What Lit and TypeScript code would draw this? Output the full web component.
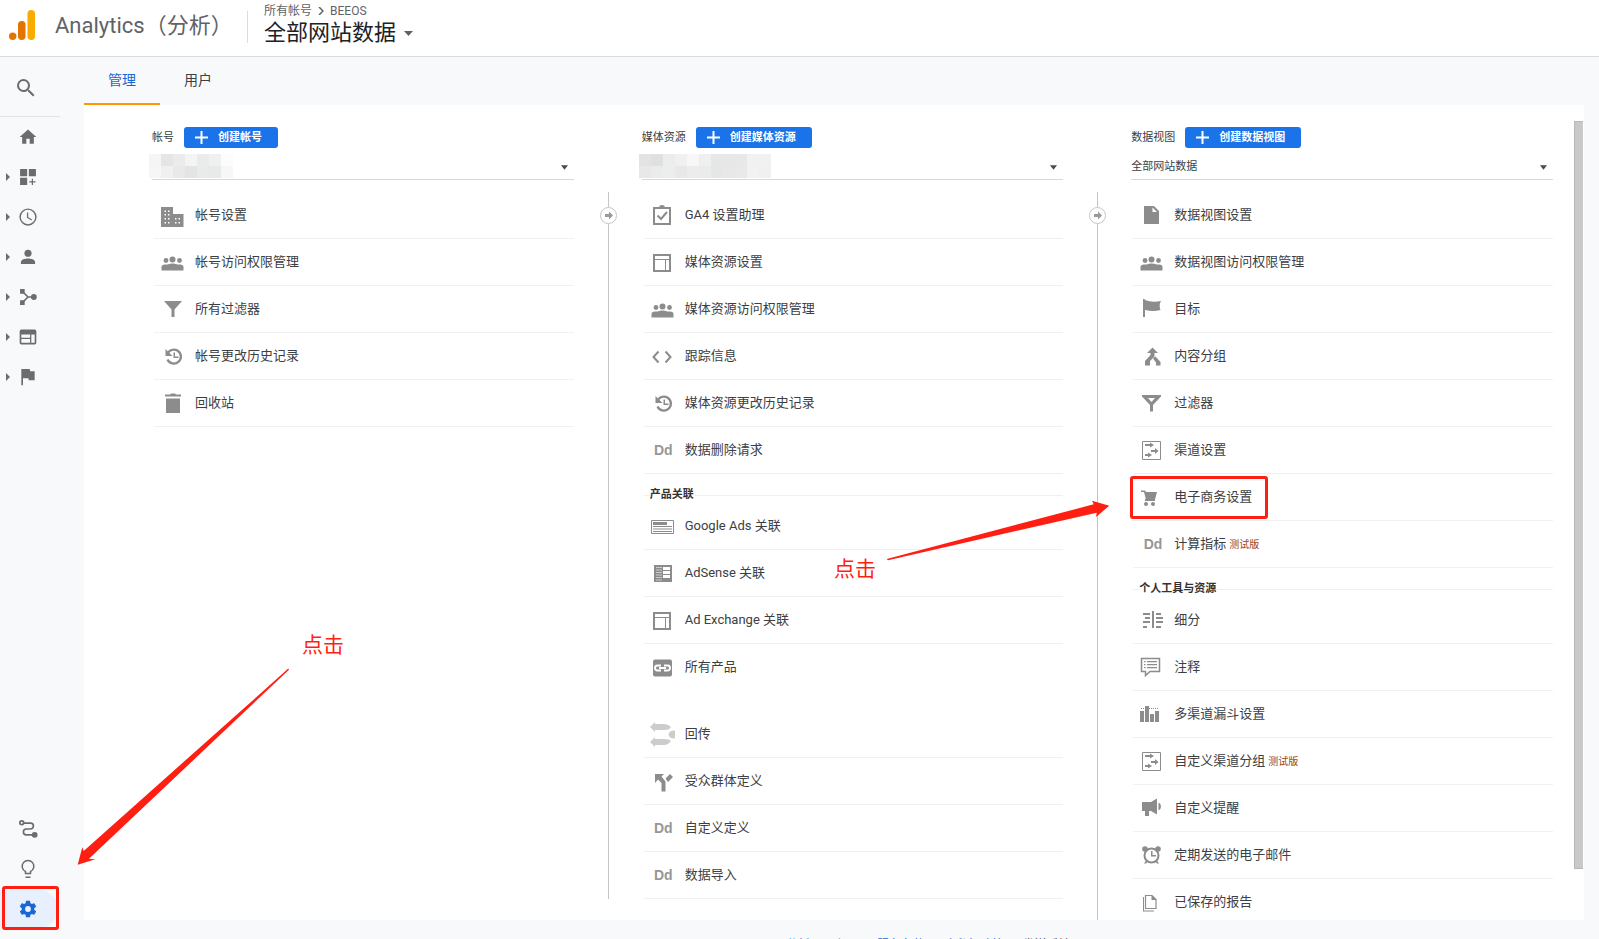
import { LitElement, html, svg, css, nothing } from "lit";
import type { SVGTemplateResult, TemplateResult } from "lit";
import { customElement, property, state } from "lit/decorators.js";
import { classMap } from "lit/directives/class-map.js";

const channelIcon = svg`
  <path d="M3.500 1.500h18v18h-18z" fill="none" stroke="currentColor"/>
  <path d="M6 4h5V2.500L15 5l-4 2.500V6H6zM12 10h4V8l3.500 3-3.500 3v-2h-4zM6 14h3v-1.500l4 2.500-4 2.500V16H6z"/>`;

const layoutIcon = svg`
  <path d="M4 3h16v16H4z" fill="none" stroke="currentColor" stroke-width="2"/>
  <path d="M4 7.500h16M15.500 7.500V19" fill="none" stroke="currentColor"/>`;

const peopleIcon = svg`
  <circle cx="12.500" cy="7.500" r="3"/><circle cx="6" cy="8.500" r="2.400"/><circle cx="19.500" cy="8.500" r="2.400"/>
  <path d="M1.500 18.500v-3.500q0-2.500 3.500-2.500h2.500q2.500-1 5-1t5 1h2.500q3.500 0 3.500 2.500v3.500z"/>`;

const historyIcon = svg`
  <path d="M7.200 8.500A7 7 0 1 1 7.500 13.500" fill="none" stroke="currentColor" stroke-width="2.300"/>
  <path d="M5.500 3v7h7zM13.500 6.500h1.500v4h3.500V12h-5z"/>`;

const ICONS: Record<string, SVGTemplateResult> = {
  building: svg`<path fill-rule="evenodd" d="M1 2h12v7h10.500v13H1zM4.500 5.500v1.500H6V5.500zM8 5.500v1.500h1.500V5.500zM4.500 9v1.500H6V9zM8 9v1.500h1.500V9zM4.500 13v1.500H6V13zM8 13v1.500h1.500V13zM4.500 17v1.500H6V17zM8 17v1.500h1.500V17zM15 13v1.500h1.500V13zM18.500 13v1.500H20V13zM15 17v1.500h1.500V17zM18.500 17v1.500H20V17z"/>`,
  people: peopleIcon,
  filter: svg`<path d="M4 2h18l-7.500 8.500V18h-3v-7.500z"/>`,
  history: historyIcon,
  trash: svg`<path d="M5 1.500h5L11 .5h4l1 1h5v2H5zM6 5.500h14V20H6z"/>`,
  clipboard: svg`
    <path d="M4 3h16v16H4z" fill="none" stroke="currentColor" stroke-width="2"/>
    <path d="M9 3.500C9 1 10 0 12 0s3 1 3 3.500z"/>
    <path d="M7.500 10.500l3.500 3.500 6-7" fill="none" stroke="currentColor" stroke-width="2"/>`,
  layout: layoutIcon,
  code: svg`<path d="M8.500 5.500L3.500 11l5 5.500M15.500 5.500l5 5.500-5 5.500" fill="none" stroke="currentColor" stroke-width="2"/>`,
  ads: svg`
    <path d="M1.500 4.500h22v13h-22z" fill="none" stroke="currentColor"/>
    <path d="M3 6h14v3H3zM3 10h19v1H3zM3 12.500h19v1H3zM3 15h19v1H3z"/>`,
  adsense: svg`
    <path fill-rule="evenodd" d="M4 2h18v17H4zM13 4v3h7V4zM13 8v3h7V8zM13 12v3h7v-3z"/>
    <path d="M6 4.500h6M6 7h6M6 9.500h6M6 12h6M6 14.500h6M6 17h6" fill="none" stroke="#ccc"/>`,
  link: svg`
    <rect x="3" y="2.500" width="19" height="17" rx="2"/>
    <path d="M11 8.500H7.500a2.500 2.500 0 0 0 0 5H11M14 8.500h3.500a2.500 2.500 0 0 1 0 5H14M9 11h7" fill="none" stroke="#fff" stroke-width="1.900"/>`,
  postback: svg`
    <path fill="#ccc" d="M0 3l5-5v2h9q4 0 7 3-1 3-7 3H5v2zM0 18l5-5v2h9q5 0 7 2-3 4-7 4H5v2z"/>
    <path fill="#ccc" d="M25 6.500v8q-6 0-6.500-4 .5-4 6.500-4z"/>`,
  split: svg`<path d="M5 3h9l-2.500 2.500 4 5V20.500h-4V12L8 8.500 5 12zM15.500 7.500L20 3l3 3-5 5z"/>`,
  doc: svg`<path fill-rule="evenodd" d="M5 1h10l5 5v13H5zM13.500 2.500V7H18z"/>`,
  flag: svg`<path d="M4 0h1.500l.5 1q7 3 16 1-2.500 4-.5 9-8 2-15 0H6v7H4z"/>`,
  merge: svg`<path d="M13.500 1.500l5.500 5.500h-3.500v3.500L11 15v4.500H6V15l5.500-6V7H8zM14 12.500l2.500-2L21.500 16v3.500h-4.500v-3z"/>`,
  funnel: svg`<path fill-rule="evenodd" d="M3 2h19v1.500L14 12v6.500h-3V12L3 3.500zM9 5l3.500 4L16 5z"/>`,
  channel: channelIcon,
  cart: svg`<path d="M2 3.500h4l1 1.500h11l-2 7.500H7L5 5H2z"/><path d="M6 12h10v2H6z"/><circle cx="7" cy="17" r="2"/><circle cx="14" cy="17" r="2"/>`,
  segments: svg`<path d="M13 1h2v17h-2zM4 3h7v2H4zM6 7h5v2H6zM4 11h7v2H4zM4 16h4v2H4zM17 3h5v2h-5zM17 7h7v2h-7zM17 11h7v2h-7zM17 16h5v2h-5z"/>`,
  comment: svg`
    <path d="M2.500 1.500h18v13H11l-4.500 4v-4h-4z" fill="none" stroke="currentColor" stroke-width="1.500"/>
    <path d="M5 4h1.500v1.200H5zM8 4h10v1.200H8zM5 7h1.500v1.200H5zM8 7h10v1.200H8zM5 10h1.500v1.200H5zM8 10h10v1.200H8z"/>`,
  bars: svg`<path d="M1 7h4v11H1zM6 2h4v16H6zM11 10h4v8h-4zM16 7h4v11h-4z"/>
    <path d="M2 4.500h18" fill="none" stroke="currentColor" stroke-dasharray="1 1"/>`,
  megaphone: svg`<path d="M3 4h9l6-3.500v16L12 13h-2v5H6v-5H3zM19.500 4.500q2.500 1 2.500 4t-2.500 4z"/>`,
  alarm: svg`
    <circle cx="12.500" cy="10.500" r="7" fill="none" stroke="currentColor" stroke-width="2"/>
    <circle cx="6" cy="4" r="2.800"/><circle cx="19" cy="4" r="2.800"/>
    <path d="M12 6h1.500v4H17v1.500h-5zM5 18.500l2-3 2 1-2 2zM20 18.500l-2-3-2 1 2 2z"/>`,
  saved: svg`
    <path d="M6.500 3.500h6.500l4 4v9h-10.500z" fill="none" stroke="currentColor" stroke-width="1.200"/>
    <path d="M12.500 3l5 5h-5zM4 5h1v13.500h10v1H4z"/>`,
};

const NAV_ICONS: Record<string, SVGTemplateResult> = {
  search: svg`<path d="M15.500 14h-.79l-.28-.27A6.470 6.470 0 0 0 16 9.500 6.500 6.500 0 1 0 9.500 16c1.610 0 3.090-.59 4.230-1.570l.27.28v.79l5 4.990L20.490 19l-4.990-5zm-6 0C7.010 14 5 11.990 5 9.500S7.010 5 9.500 5 14 7.010 14 9.500 11.990 14 9.500 14z"/>`,
  home: svg`<path d="M10 20v-6h4v6h5v-8h3L12 3 2 12h3v8z"/>`,
  custom: svg`<path d="M2.500 2.500h8.500v8.500h-8.500zM13 2.500h8.500v8.500H13zM2.500 13h8.500v8.500h-8.500zM16.500 14H18v3h3v1.500h-3v3h-1.500v-3h-3V17h3z"/>`,
  clock: svg`<circle cx="12" cy="12" r="9.500" fill="none" stroke="currentColor" stroke-width="1.700"/><path d="M11.500 6.500v6l5 3" fill="none" stroke="currentColor" stroke-width="1.500"/>`,
  person: svg`<circle cx="12" cy="7.500" r="4.300"/><path d="M3.500 20.500v-2.500c0-3 5-4.300 8.500-4.300s8.500 1.300 8.500 4.300v2.500z"/>`,
  branch: svg`<path d="M2.500 2.500h5.500v5.500h-5.500zM2.500 16h5.500v5.500h-5.500z"/><path d="M6 6l6 6h7M12 12l-6 6" fill="none" stroke="currentColor" stroke-width="2"/><circle cx="19" cy="12" r="3.500"/>`,
  window: svg`<path fill-rule="evenodd" d="M4 3h16q2 0 2 2v14q0 2-2 2H4q-2 0-2-2V5q0-2 2-2zM4 9v4h10.500V9zM4 14.500V19h10.500v-4.500zM16 9v10h4V9z"/>`,
  goal: svg`<path d="M4 2.500h10l.6 2.500H20v11h-7l-.6-2.500H6V22H4z"/>`,
  path: svg`<path d="M6 5h9a3.500 3.500 0 0 1 0 7h-5a3.500 3.500 0 0 0 0 7h8" fill="none" stroke="currentColor" stroke-width="2"/><circle cx="4.500" cy="4.500" r="2.300" fill="#f8f9fb" stroke="currentColor" stroke-width="2"/><circle cx="20" cy="19" r="3.500"/>`,
  bulb: svg`<path d="M9 17.500v-2.500A7 7 0 1 1 15 15v2.500zM9 22h6" fill="none" stroke="currentColor" stroke-width="1.800"/>`,
  gear: svg`<path d="M19.430 12.980c.04-.32.07-.64.07-.98s-.03-.66-.07-.98l2.110-1.650c.19-.15.24-.42.12-.64l-2-3.460c-.12-.22-.39-.3-.61-.22l-2.490 1c-.52-.4-1.080-.73-1.690-.98l-.38-2.650A.49.49 0 0 0 14 2h-4c-.25 0-.46.18-.49.42l-.38 2.650c-.61.25-1.170.59-1.690.98l-2.490-1c-.23-.09-.49 0-.61.22l-2 3.460c-.13.22-.07.49.12.64l2.110 1.650c-.04.32-.07.65-.07.98s.03.66.07.98l-2.110 1.650c-.19.15-.24.42-.12.64l2 3.460c.12.22.39.3.61.22l2.490-1c.52.4 1.080.73 1.690.98l.38 2.650c.03.24.24.42.49.42h4c.25 0 .46-.18.49-.42l.38-2.650c.61-.25 1.170-.59 1.690-.98l2.490 1c.23.09.49 0 .61-.22l2-3.460c.12-.22.07-.49-.12-.64zM12 15.500a3.500 3.500 0 1 1 0-7 3.500 3.500 0 0 1 0 7z"/>`,
};

interface Item {
  icon: string;
  label: string;
  beta?: boolean;
  plain?: boolean;
  marked?: boolean;
}
interface Section {
  title?: string;
  items: Item[];
}

const ACCOUNT: Section[] = [
  {
    items: [
      { icon: "building", label: "帐号设置" },
      { icon: "people", label: "帐号访问权限管理" },
      { icon: "filter", label: "所有过滤器" },
      { icon: "history", label: "帐号更改历史记录" },
      { icon: "trash", label: "回收站" },
    ],
  },
];

const PROPERTY: Section[] = [
  {
    items: [
      { icon: "clipboard", label: "GA4 设置助理" },
      { icon: "layout", label: "媒体资源设置" },
      { icon: "people", label: "媒体资源访问权限管理" },
      { icon: "code", label: "跟踪信息" },
      { icon: "history", label: "媒体资源更改历史记录" },
      { icon: "Dd", label: "数据删除请求" },
    ],
  },
  {
    title: "产品关联",
    items: [
      { icon: "ads", label: "Google Ads 关联" },
      { icon: "adsense", label: "AdSense 关联" },
      { icon: "layout", label: "Ad Exchange 关联" },
      { icon: "link", label: "所有产品", plain: true },
    ],
  },
  {
    items: [
      { icon: "postback", label: "回传" },
      { icon: "split", label: "受众群体定义" },
      { icon: "Dd", label: "自定义定义" },
      { icon: "Dd", label: "数据导入" },
    ],
  },
];

const VIEW: Section[] = [
  {
    items: [
      { icon: "doc", label: "数据视图设置" },
      { icon: "people", label: "数据视图访问权限管理" },
      { icon: "flag", label: "目标" },
      { icon: "merge", label: "内容分组" },
      { icon: "funnel", label: "过滤器" },
      { icon: "channel", label: "渠道设置" },
      { icon: "cart", label: "电子商务设置", marked: true },
      { icon: "Dd", label: "计算指标", beta: true },
    ],
  },
  {
    title: "个人工具与资源",
    items: [
      { icon: "segments", label: "细分" },
      { icon: "comment", label: "注释" },
      { icon: "bars", label: "多渠道漏斗设置" },
      { icon: "channel", label: "自定义渠道分组", beta: true },
      { icon: "megaphone", label: "自定义提醒" },
      { icon: "alarm", label: "定期发送的电子邮件" },
      { icon: "saved", label: "已保存的报告" },
    ],
  },
];

@customElement("admin-column")
class AdminColumn extends LitElement {
  @property() heading = "";
  @property() action = "";
  @property() value = "";
  @property({ attribute: false }) mosaic: string[][] = [];
  @property({ attribute: false }) sections: Section[] = [];

  static styles = css`
    :host { display: block; min-width: 0; color: #3c4043; }
    .head { display: flex; align-items: center; gap: 10px; height: 21px; font-size: 11px; line-height: 16px; }
    .create {
      display: flex; align-items: center; gap: 10px; height: 21px; padding: 0 16px 0 11px;
      border: 0; border-radius: 3px; background: #1a73e8; color: #fff;
      font: 700 11px/16px Roboto, "Noto Sans CJK SC", sans-serif; cursor: pointer;
    }
    .plus { width: 13px; height: 13px; }
    .picker { position: relative; margin: 2px 0 12px; }
    .select {
      display: block; box-sizing: border-box; width: 100%; height: 30px; padding: 4px 0 0;
      appearance: none; border: 0; border-bottom: 1px solid #d8d8d8; border-radius: 0; background: transparent;
      color: #3c4043; font: 400 11px/16px Roboto, "Noto Sans CJK SC", sans-serif;
    }
    .caret { position: absolute; right: 6px; top: 15px; width: 7px; height: 5px; fill: #4a4a4a; pointer-events: none; }
    .mosaic { position: absolute; left: -3px; top: 4px; height: 24px; }
    .list { list-style: none; margin: 0 0 0 2px; padding: 0; }
    .list + .list { margin-top: 20px; }
    .row { position: relative; border-bottom: 1px solid #f0f0f0; }
    .row.plain { border-color: transparent; }
    .link {
      display: flex; align-items: center; gap: 11px; height: 46px; padding-left: 6px;
      color: #3c4043; font-size: 13px; line-height: 20px; text-decoration: none; white-space: nowrap;
    }
    .icon { flex: none; width: 24px; height: 24px; margin-top: 4px; overflow: visible; fill: currentColor; color: #8c8c8c; }
    .dd { flex: none; box-sizing: border-box; width: 24px; padding-right: 1px; text-align: right; color: #979797; font: 700 14px/24px "Liberation Sans", sans-serif; }
    .beta { margin-left: 3px; color: #a0430a; font-size: 10px; }
    .title { display: flex; align-items: center; height: 16px; margin: 13px 0 0 2px; font-size: 11px; line-height: 16px; font-weight: 700; color: #333; }
    .title::before { content: ""; width: 6px; height: 1px; background: #f0f0f0; }
    .title::after { content: ""; flex: 1; height: 1px; background: #f0f0f0; }
    .mark { position: absolute; left: -3px; top: 2px; box-sizing: border-box; width: 138px; height: 43px; border: 3px solid #ff1e12; border-radius: 3px; pointer-events: none; }
  `;

  private renderMosaic(): TemplateResult | typeof nothing {
    if (!this.mosaic.length) return nothing;
    const cols = this.mosaic[0].length;
    return html`<svg class="mosaic" width=${cols * 12} height="24" aria-hidden="true">
      ${this.mosaic.map((row, y) =>
        row.map((c, x) => svg`<rect x=${x * 12} y=${y * 12} width="12" height="12" fill=${c} />`)
      )}
    </svg>`;
  }

  private renderItem(item: Item): TemplateResult {
    return html`<li class=${classMap({ row: true, plain: !!item.plain })}>
      <a class="link" href="#">
        ${item.icon === "Dd"
          ? html`<span class="dd">Dd</span>`
          : html`<svg class="icon" viewBox="0 0 24 24" aria-hidden="true">${ICONS[item.icon]}</svg>`}
        <span>${item.label}${item.beta ? html`<span class="beta">测试版</span>` : nothing}</span>
      </a>
      ${item.marked ? html`<span class="mark"></span>` : nothing}
    </li>`;
  }

  render() {
    return html`
      <div class="head">
        <label for="entity">${this.heading}</label>
        <button class="create" type="button">
          <svg class="plus" viewBox="0 0 13 13" aria-hidden="true"><path d="M6.500 0v13M0 6.500h13" stroke="#fff" stroke-width="2" /></svg>
          ${this.action}
        </button>
      </div>
      <div class="picker">
        <select class="select" id="entity"><option>${this.value}</option></select>
        <svg class="caret" viewBox="0 0 8 5" aria-hidden="true"><path d="M0 0h8L4 5z" /></svg>
        ${this.renderMosaic()}
      </div>
      ${this.sections.map(
        (s) => html`${s.title ? html`<h3 class="title">${s.title}</h3>` : nothing}
          <ul class="list">${s.items.map((i) => this.renderItem(i))}</ul>`
      )}
    `;
  }
}

@customElement("app-root")
class AppRoot extends LitElement {
  @state() private tab = "管理";

  static styles = css`
    :host {
      display: flex; flex-direction: column; height: 100vh; overflow: hidden; position: relative;
      background: #f8f9fb; color: #3c4043; font-family: Roboto, "Noto Sans CJK SC", sans-serif;
    }
    .top { display: flex; align-items: center; flex: none; box-sizing: border-box; height: 57px; padding: 0 9px; background: #fff; border-bottom: 1px solid #dadce0; }
    .logo { flex: none; width: 26px; height: 30px; margin-bottom: 6px; }
    .brand { margin: 0 0 4px 20px; width: 192px; font-size: 22px; line-height: 32px; font-weight: 400; color: #5f6368; white-space: nowrap; }
    .crumbs { padding: 0 0 6px 17px; position: relative; }
    .crumbs::before { content: ""; position: absolute; left: 0; top: 8px; width: 1px; height: 32px; background: #dadce0; }
    .trail { display: flex; align-items: center; gap: 6px; height: 16px; font-size: 12px; line-height: 16px; color: #5f6368; }
    .chev { width: 6px; height: 8px; fill: none; stroke: #5f6368; }
    .current { display: flex; align-items: center; gap: 8px; padding: 0; border: 0; background: none; color: #202124; font: 400 22px/28px Roboto, "Noto Sans CJK SC", sans-serif; }
    .down { width: 9px; height: 5px; fill: #5f6368; }
    .body { display: flex; flex: 1; min-height: 0; }
    .side { display: flex; flex-direction: column; flex: none; width: 84px; color: #6b6c6e; }
    .side-btn { position: relative; display: flex; align-items: center; gap: 8px; box-sizing: border-box; height: 40px; width: 60px; padding: 0 0 0 6px; border: 0; background: none; color: inherit; }
    .tri { width: 4px; height: 8px; fill: #6b6c6e; }
    .tri.off { visibility: hidden; }
    .nav-icon { width: 20px; height: 20px; fill: currentColor; }
    .find { display: flex; align-items: center; box-sizing: border-box; width: 60px; height: 60px; padding: 2px 0 0 14px; border: 0; border-bottom: 1px solid #e0e2e5; background: none; color: #6b6c6e; }
    .find-icon { width: 24px; height: 24px; fill: currentColor; }
    .spacer { flex: 1; }
    .active { width: 58px; height: 38px; margin: 1px 0 11px; border-radius: 0 19px 19px 0; background: #e8f0fe; color: #1967d2; }
    .mark { position: absolute; left: 2px; top: -4px; box-sizing: border-box; width: 57px; height: 44px; border: 3px solid #ff1e12; border-radius: 3px; }
    .main { display: flex; flex-direction: column; flex: 1; min-width: 0; padding-right: 15px; }
    .tabs { display: flex; flex: none; height: 48px; }
    .tab { padding: 0 24px; border: 0; border-bottom: 2px solid transparent; background: none; color: #3c4043; font: 400 14px/44px Roboto, "Noto Sans CJK SC", sans-serif; }
    .tab.on { border-color: #ff9800; color: #1967d2; }
    .panel { display: flex; flex: 1; min-height: 0; background: #fff; overflow: hidden; }
    .grid { flex: 1; display: grid; grid-template-columns: 1fr 68px 1fr 68px 1fr; padding: 22px 21px 0 68px; height: max-content; }
    .pair { grid-column: span 3; display: grid; grid-template-columns: subgrid; align-self: start; }
    .sep { display: flex; flex-direction: column; align-items: center; padding: 65px 0 0 1px; }
    .sep::before { content: ""; width: 1px; height: 15px; background: #c4c4c4; }
    .sep::after { content: ""; flex: 1; width: 1px; background: #c4c4c4; }
    .go { flex: none; width: 17px; height: 17px; }
    .thumb { flex: none; box-sizing: border-box; width: 9px; margin: 16px 1px 51px 0; background: #c9c9c9; border: 1px solid #b8b8b8; border-right: 0; }
    .foot { flex: none; display: flex; gap: 8px; box-sizing: border-box; height: 19px; padding: 16px 0 0 567px; overflow: hidden; font-size: 12px; line-height: 18px; white-space: nowrap; }
    .foot-note { width: 127px; }
    .foot-link { color: #1967d2; text-decoration: none; }
    .arrows { position: absolute; left: 0; top: 0; width: 1px; height: 1px; overflow: visible; fill: #ff1e12; pointer-events: none; }
    .note { position: absolute; color: #ff1e12; font-size: 21px; line-height: 28px; }
    .note-a { left: 302px; top: 631px; }
    .note-b { left: 834px; top: 555px; }
  `;

  private navButton(icon: string, label: string, tri: boolean) {
    return html`<button class="side-btn" type="button" aria-label=${label}>
      <svg class=${classMap({ tri: true, off: !tri })} viewBox="0 0 4 8"><path d="M0 0l4 4-4 4z" /></svg>
      <svg class="nav-icon" viewBox="0 0 24 24">${NAV_ICONS[icon]}</svg>
    </button>`;
  }

  private separator() {
    return html`<div class="sep">
      <svg class="go" viewBox="0 0 17 17" aria-hidden="true">
        <circle cx="8.500" cy="8.500" r="8" fill="#fff" stroke="#c4c4c4" />
        <path fill="#999" d="M5 7h4V4.500l4 4-4 4V10H5z" />
      </svg>
    </div>`;
  }

  render() {
    return html`
      <header class="top">
        <svg class="logo" viewBox="0 0 26 30" aria-hidden="true">
          <rect x="18.500" y="0" width="7.500" height="30" rx="3.700" fill="#f9ab00" />
          <rect x="9" y="11" width="7.500" height="19" rx="3.700" fill="#e37400" />
          <circle cx="3.700" cy="26.300" r="3.700" fill="#e37400" />
        </svg>
        <h1 class="brand">Analytics（分析）</h1>
        <div class="crumbs">
          <div class="trail">
            <span>所有帐号</span>
            <svg class="chev" viewBox="0 0 6 8"><path d="M1 0l4 4-4 4" stroke-width="1.500" /></svg>
            <span>BEEOS</span>
          </div>
          <button class="current" type="button">
            全部网站数据
            <svg class="down" viewBox="0 0 9 5"><path d="M0 0h9L4.500 5z" /></svg>
          </button>
        </div>
      </header>
      <div class="body">
        <nav class="side">
          <button class="find" type="button" aria-label="搜索">
            <svg class="find-icon" viewBox="0 0 24 24">${NAV_ICONS.search}</svg>
          </button>
          ${this.navButton("home", "首页", false)} ${this.navButton("custom", "自定义", true)}
          ${this.navButton("clock", "实时", true)} ${this.navButton("person", "受众群体", true)}
          ${this.navButton("branch", "流量获取", true)} ${this.navButton("window", "行为", true)}
          ${this.navButton("goal", "转化", true)}
          <div class="spacer"></div>
          ${this.navButton("path", "归因", false)} ${this.navButton("bulb", "发现", false)}
          <button class="side-btn active" type="button" aria-label="管理">
            <svg class="tri off" viewBox="0 0 4 8"></svg>
            <svg class="nav-icon" viewBox="0 0 24 24">${NAV_ICONS.gear}</svg>
            <span class="mark"></span>
          </button>
        </nav>
        <main class="main">
          <div class="tabs">
            ${["管理", "用户"].map(
              (t) => html`<button class=${classMap({ tab: true, on: t === this.tab })} type="button" @click=${() => (this.tab = t)}>${t}</button>`
            )}
          </div>
          <div class="panel">
            <div class="grid">
              <div class="pair">
                <admin-column
                  heading="帐号" action="创建帐号" .sections=${ACCOUNT}
                  .mosaic=${[
                    ["#f5f5f5", "#e5e5e5", "#ebebeb", "#f3f5f5", "#ebebeb", "#f0f0f0", "#fcfcfc"],
                    ["#f5f7f7", "#f0f0f0", "#e9e9e9", "#e4e4e4", "#e9ebeb", "#e8e9e9", "#f7f7f7"],
                  ]}
                ></admin-column>
                ${this.separator()}
                <admin-column
                  heading="媒体资源" action="创建媒体资源" .sections=${PROPERTY}
                  .mosaic=${[
                    ["#e3e3e3", "#e0e0e0", "#ebeded", "#f0f0f0", "#f7f7f7", "#efefef", "#e6e8e8", "#e7e7e7", "#e8e8e8", "#f1f1f1", "#f1f1f1"],
                    ["#e8e8e8", "#ebebeb", "#eceeee", "#e8e8e8", "#ececec", "#eaecec", "#e5e6e6", "#e8e8e8", "#e8e9e9", "#f2f2f2", "#f0f0f0"],
                  ]}
                ></admin-column>
              </div>
              ${this.separator()}
              <admin-column heading="数据视图" action="创建数据视图" value="全部网站数据" .sections=${VIEW}></admin-column>
            </div>
            <div class="thumb"></div>
          </div>
          <footer class="foot">
            <span class="foot-note">© 2021 Google</span>
            <a class="foot-link" href="#">分析工具主页</a><span>|</span>
            <a class="foot-link" href="#">服务条款</a><span>|</span>
            <a class="foot-link" href="#">隐私权政策</a><span>|</span>
            <span>发送反馈</span>
          </footer>
        </main>
      </div>
      <svg class="arrows" aria-hidden="true">
        <path d="M288.300 668.600L83.700 851l-1.400-3.700-4.600 17.400 17.600-5.400-6.300-.6L289 669.800z" />
        <path d="M886.700 559l207-54.700-1.700-3.600 17.300 5-13.300 11.300.7-4.300L888 560.200z" />
      </svg>
      <span class="note note-a">点击</span>
      <span class="note note-b">点击</span>
    `;
  }
}
